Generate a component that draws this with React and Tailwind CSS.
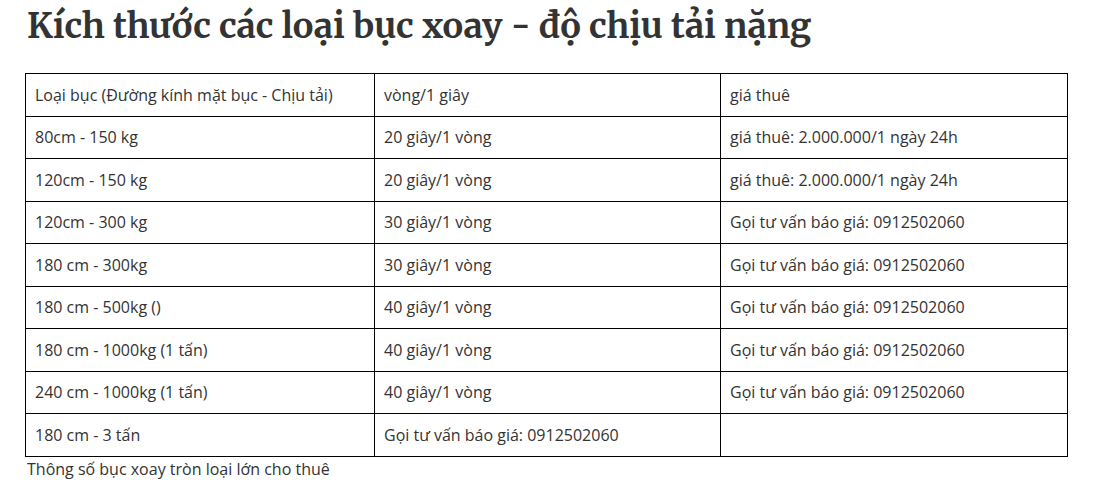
import React from "react";

const rows = [
  ["Loại bục (Đường kính mặt bục - Chịu tải)", "vòng/1 giây", "giá thuê"],
  ["80cm - 150 kg", "20 giây/1 vòng", "giá thuê: 2.000.000/1 ngày 24h"],
  ["120cm - 150 kg", "20 giây/1 vòng", "giá thuê: 2.000.000/1 ngày 24h"],
  ["120cm - 300 kg", "30 giây/1 vòng", "Gọi tư vấn báo giá: 0912502060"],
  ["180 cm - 300kg", "30 giây/1 vòng", "Gọi tư vấn báo giá: 0912502060"],
  ["180 cm - 500kg ()", "40 giây/1 vòng", "Gọi tư vấn báo giá: 0912502060"],
  ["180 cm - 1000kg (1 tấn)", "40 giây/1 vòng", "Gọi tư vấn báo giá: 0912502060"],
  ["240 cm - 1000kg (1 tấn)", "40 giây/1 vòng", "Gọi tư vấn báo giá: 0912502060"],
  ["180 cm - 3 tấn", "Gọi tư vấn báo giá: 0912502060", ""],
];

const App = () => {
  return (
    <div className="w-[1096px] h-[488px] bg-white text-[#333] overflow-hidden pl-[25px] pr-[29px]">
      {/* TITLE */}
      <h1 className="font-['Merriweather','DejaVu_Serif',serif] font-bold text-[34.5px] leading-none pt-[9px] pl-[2px] h-[73px]">
        Kích thước các loại bục xoay - độ chịu tải nặng
      </h1>

      {/* TABLE */}
      <table className="w-[1042px] border-collapse table-fixed font-['Open_Sans',sans-serif] text-[16px]">
        <colgroup>
          <col className="w-[349px]" />
          <col className="w-[346px]" />
          <col className="w-[347px]" />
        </colgroup>
        <tbody>
          {rows.map((r, i) => (
            <tr key={i} className="h-[42.5px]">
              {r.map((c, j) => (
                <td key={j} className="border border-black px-[9px] py-0 align-middle whitespace-nowrap">
                  {c}
                </td>
              ))}
            </tr>
          ))}
        </tbody>
      </table>

      {/* CAPTION */}
      <p className="font-['Open_Sans',sans-serif] text-[16px] leading-[24px] pl-[2px]">
        Thông số bục xoay tròn loại lớn cho thuê
      </p>
    </div>
  );
};

export default App;
